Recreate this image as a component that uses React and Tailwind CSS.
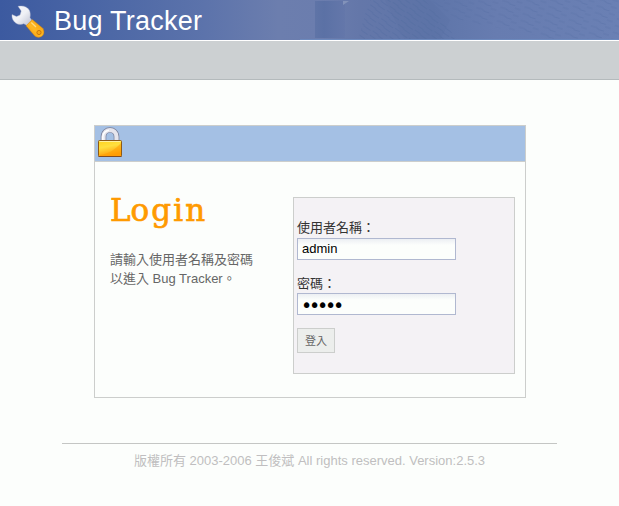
const sans = "font-['Liberation_Sans','Noto_Sans_CJK_TC',sans-serif]";

function Wrench() {
  return (
    <svg className="ml-[11px] mt-[5px] h-[33px] w-[34px] shrink-0" viewBox="0 0 34 33">
      <defs>
        <linearGradient id="steel" x1="0" y1="0" x2="1" y2="1">
          <stop offset="0" stopColor="#f4f5fa" />
          <stop offset="0.5" stopColor="#f0f1f6" />
          <stop offset="1" stopColor="#b9bdd0" />
        </linearGradient>
        <linearGradient id="grip" x1="0" y1="1" x2="1" y2="0">
          <stop offset="0" stopColor="#ee8c05" />
          <stop offset="0.45" stopColor="#ffb824" />
          <stop offset="1" stopColor="#f39a08" />
        </linearGradient>
      </defs>
      <path
        d="M7 1.300 C12 .2 16.500 1.500 18.500 5.500 C19.500 8 19.500 10.500 19 12.500 L21 15.500 L16 20.500 L12.800 18.700 C8.500 20.700 4 18.700 2 15 C1 13 .8 11.500 1 9.500 L5.500 11.500 L9 10 L10.200 6 Z"
        fill="url(#steel)"
        stroke="#a0a7c4"
        strokeWidth="0.4"
      />
      <path
        d="M21.300 14.500 L31.800 23.300 C34 26.500 33 31.500 28.500 32.300 C26.700 32.600 25 32 23.500 30.700 L15 20.800 Z"
        fill="url(#grip)"
        stroke="#c47a12"
        strokeWidth="0.4"
      />
      <path d="M20.300 17.500 L25 22" stroke="#ffdc80" strokeWidth="1.300" />
      <circle cx="28" cy="27.500" r="2.100" fill="#f7a512" stroke="#c2730c" strokeWidth="0.9" />
    </svg>
  );
}

function Lock() {
  return (
    <svg className="ml-[2px] mt-px h-[32px] w-[26px]" viewBox="0 0 26 32">
      <defs>
        <linearGradient id="gold" x1="0" y1="0" x2="0.300" y2="1">
          <stop offset="0" stopColor="#ffd21c" />
          <stop offset="0.45" stopColor="#ffe040" />
          <stop offset="1" stopColor="#ff9c08" />
        </linearGradient>
      </defs>
      <path d="M6.500 15 V9.800 C6.500 .8 19.500 .8 19.500 9.800 V15" fill="none" stroke="#777e98" strokeWidth="5.600" />
      <path d="M6.500 15 V9.800 C6.500 .8 19.500 .8 19.500 9.800 V15" fill="none" stroke="#e5e5ed" strokeWidth="4.200" />
      <path d="M5.800 14 V9.500 C6.300 5.500 8.500 3.800 12 3.200" fill="none" stroke="#ffffff" strokeWidth="1.400" />
      <rect x="1.500" y="13.500" width="23" height="16" rx="1" fill="url(#gold)" stroke="#8d5a16" strokeWidth="1" />
      <path d="M3 28 C10 27 17 24 24 16 V29 H3 Z" fill="#ff9c00" opacity="0.500" />
      <path d="M2.500 14.500 H23.500" stroke="#fff0a0" strokeWidth="1" />
      <path d="M1.500 29.500 H24.500" stroke="#804b20" strokeWidth="1" />
    </svg>
  );
}

function Banner() {
  return (
    <svg className="absolute inset-0 h-full w-full" viewBox="0 0 619 40" preserveAspectRatio="none">
      <defs>
        <linearGradient id="banner">
          <stop offset="0" stopColor="#3c5aa0" />
          <stop offset="0.180" stopColor="#4d68a6" />
          <stop offset="0.330" stopColor="#5c73ab" />
          <stop offset="0.450" stopColor="#6c7eae" />
          <stop offset="0.520" stopColor="#6b7dae" />
          <stop offset="0.580" stopColor="#6477a9" />
          <stop offset="0.700" stopColor="#5e75a9" />
          <stop offset="0.800" stopColor="#677cb0" />
          <stop offset="1" stopColor="#6a80b4" />
        </linearGradient>
        <linearGradient id="fold">
          <stop offset="0" stopColor="#5f74a7" />
          <stop offset="0.3" stopColor="#5b71a5" />
          <stop offset="1" stopColor="#6477aa" />
        </linearGradient>
        <pattern id="weave" width="17" height="5" patternUnits="userSpaceOnUse" patternTransform="rotate(35)">
          <path d="M0 1.500 H6 L8 2.500 H15" stroke="#4f699f" strokeWidth="1.200" fill="none" />
        </pattern>
        <pattern id="ripple" width="23" height="7" patternUnits="userSpaceOnUse" patternTransform="rotate(16)">
          <path d="M0 2 H6 L9 3.500 H14 M14 6 H20" stroke="#536ca2" strokeWidth="1.200" fill="none" />
        </pattern>
      </defs>
      <rect width="619" height="40" fill="url(#banner)" />
      <rect x="315" y="1" width="30" height="37" fill="url(#fold)" />
      <path d="M343 1 H349 L343 5 Z" fill="#8292ba" />
      <path d="M369 0 H425 L458 40 H358 Z" fill="url(#weave)" opacity="0.350" />
      <path d="M430 0 H619 V40 H560 L458 20 Z" fill="url(#ripple)" opacity="0.350" />
      <path d="M385 0 H430 L450 20 L440 40 H405 Z" fill="#536b9f" opacity="0.120" />
      <path d="M300 39.500 H619" stroke="#6c89bd" />
    </svg>
  );
}

function Field({ label, type, value, labelClassName, inputClassName }) {
  return (
    <label className="block">
      <span className={"block text-[13px] leading-5 text-[#333] " + labelClassName}>{label}</span>
      <input
        type={type}
        defaultValue={value}
        className={
          "block h-[22px] w-[159px] border border-[#b0b8d0] bg-[#fcfefc] bg-linear-to-b from-[#eceff3] to-[#fcfefc] to-30% text-black outline-none " +
          inputClassName
        }
      />
    </label>
  );
}

export default function App() {
  return (
    <div className={"h-[506px] w-[619px] overflow-hidden bg-[#fcfefc] " + sans}>
      <header className="relative h-10">
        <Banner />
        <div className="relative flex h-10">
          <Wrench />
          <h1 className="ml-[9px] text-[27px] leading-[42px] tracking-[0.250px] text-white">Bug Tracker</h1>
        </div>
      </header>
      <div className="h-10 border-t border-b border-t-white border-b-[#b4babc] bg-[#ccd0d2]" />

      <main className="ml-[94px] mt-[45px] h-[273px] w-[432px] border border-[#cccecc]">
        <div className="flex h-9 items-start border-b border-[#cccecc] bg-[#a4c0e4]">
          <Lock />
        </div>
        <div className="flex">
          <section className="w-[198px] pl-[15px] pt-[28px]">
            <h2 className="h-[40px] whitespace-nowrap text-[31px] leading-[40px] text-[#ff9a00] font-['DejaVu_Serif',serif] [-webkit-text-stroke:0.700px_#ff9a00]">
              L<span className="tracking-[2.100px]">ogi</span>n
            </h2>
            <p className="mt-[20px] text-[13px] leading-[19px] text-[#666]">
              請輸入使用者名稱及密碼
              <br />
              以進入 Bug Tracker。
            </p>
          </section>
          <form className="mt-[35px] h-[177px] w-[222px] border border-[#cccecc] bg-[#f4f2f5] pl-[3px] pt-5">
            <Field
              label="使用者名稱："
              type="text"
              value="admin"
              labelClassName="h-5"
              inputClassName="pb-[2px] pl-[4px] text-[13px]"
            />
            <Field
              label="密碼："
              type="password"
              value="admin"
              labelClassName="mt-[14px] h-[19px]"
              inputClassName="pl-[3px] pt-[2px] font-['DejaVu_Sans',sans-serif] text-[19px] tracking-[-3.200px]"
            />
            <button
              type="button"
              className="mt-[13px] block h-[25px] w-[38px] border border-[#cccecc] bg-[#eceeec] text-[11px] leading-[22px] text-[#666]"
            >
              登入
            </button>
          </form>
        </div>
      </main>

      <footer className="ml-[62px] mt-[45px] w-[495px] border-t border-[#c4c6c4] pt-[7px] text-center text-[13px] leading-[19px] text-[#c0bec0]">
        版權所有 2003-2006 王俊斌 All rights reserved. Version:2.5.3
      </footer>
    </div>
  );
}
